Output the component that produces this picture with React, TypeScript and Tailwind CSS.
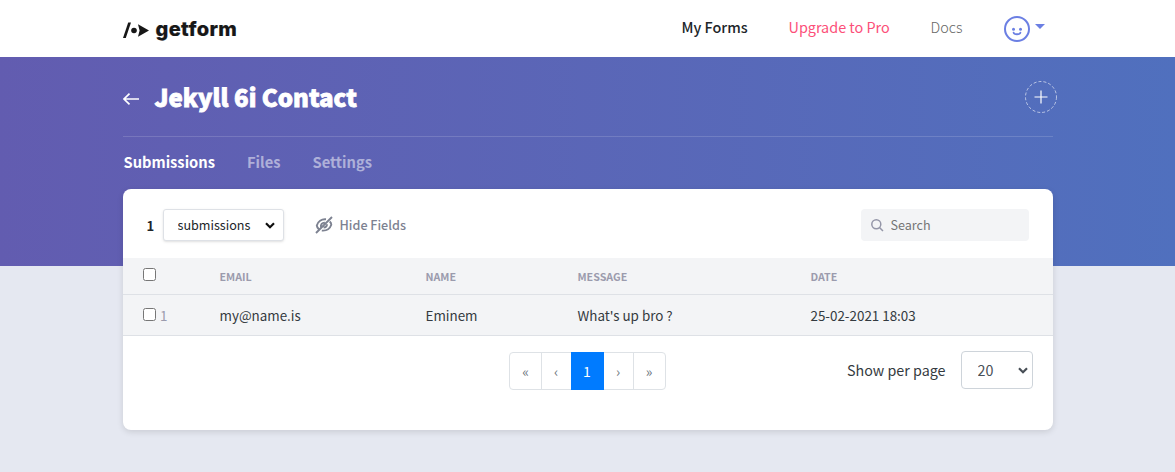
import React from 'react';

const tabs = ['Submissions', 'Files', 'Settings'];

function Logo() {
  return (
    <div className="flex items-center">
      <svg width="26" height="18" viewBox="0 0 26 18" className="mt-[3px]" fill="#171717">
        <path d="M0 17L5.200 1.500H8L2.800 17Z" />
        <circle cx="11" cy="9.500" r="2.800" />
        <path d="M15 3.300L26 9.500L15 15.700L16.600 9.500Z" />
      </svg>
      <span className="ml-[7px] font-['Inter',sans-serif] text-[20px] leading-6 font-extrabold tracking-[0.4px] text-[#171717] [-webkit-text-stroke:0.2px_#171717]">getform</span>
    </div>
  );
}

function Avatar() {
  return (
    <svg width="26" height="26" viewBox="0 0 26 26" fill="none" stroke="#6b7fe3" strokeWidth="2">
      <circle cx="13" cy="13" r="12" />
      <path d="M9.600 16.600C10 18.800 16 18.800 16.400 16.600" strokeLinecap="round" strokeWidth="1.800" />
      <circle cx="9.500" cy="13.300" r="1.500" fill="#6b7fe3" stroke="none" />
      <circle cx="16.500" cy="13.300" r="1.500" fill="#6b7fe3" stroke="none" />
    </svg>
  );
}

function SelectArrow({ className }: { className: string }) {
  return (
    <svg width="10" height="7" viewBox="0 0 10 7" className={`pointer-events-none absolute ${className}`} fill="none" stroke="currentColor" strokeWidth="2.200">
      <path d="M1 1.200L5 5.200L9 1.200" />
    </svg>
  );
}

function Header() {
  return (
    <header className="h-[57px] bg-white">
      <div className="mx-auto flex h-[57px] w-[930px] items-center justify-between">
        <Logo />
        <nav className="flex items-center text-[14.4px] leading-6">
          <span className="mb-[3px] w-[107px] font-medium text-[#212529]">My Forms</span>
          <span className="mb-[3px] w-[142px] text-[#fc4f79]">Upgrade to Pro</span>
          <span className="mb-[3px] w-[73px] font-light text-[#666]">Docs</span>
          <Avatar />
          <svg width="10" height="5" viewBox="0 0 10 5" className="mr-[8px] mb-1 ml-[5px]" fill="#6b7fe3">
            <path d="M0 0H10L5 5Z" />
          </svg>
        </nav>
      </div>
    </header>
  );
}

function Toolbar() {
  return (
    <div className="flex h-[69px] items-center px-6 pt-[3px]">
      <span className="w-4 pt-px text-[13px] font-bold text-[#212529]">1</span>
      <div className="relative text-[#111]">
        <select className="block h-8 w-[121px] appearance-none rounded-[3px] border border-[#dee1e6] bg-white pl-[14px] text-[12.6px] text-[#212529] shadow-sm">
          <option>submissions</option>
        </select>
        <SelectArrow className="top-[13px] right-[9px]" />
      </div>
      <svg width="18" height="18" viewBox="0 0 18 18" className="ml-[31px]" fill="none" stroke="#7d8291" strokeWidth="1.900">
        <path d="M11 3.300C6.500 2.800 2.800 5.500 1.800 9.500C2 11 2.600 12 3.700 13M14.700 5.500C15.800 6.500 16.300 7.500 16.300 8.800C15 12.500 11.500 15 6.800 14.600M6 11C5.300 8.500 7.200 6.400 9.800 6.600M8.600 11.600C10.600 11.400 12 10 12 8.200M1 17L17 1" />
      </svg>
      <span className="ml-[7px] text-[12.600px] font-medium text-[#7d8291]">Hide Fields</span>
      <div className="ml-auto flex h-8 w-[168px] items-center rounded bg-[#f3f4f6] pl-[10px]">
        <svg width="13" height="13" viewBox="0 0 13 13" fill="none" stroke="#9496a8" strokeWidth="1.500">
          <circle cx="5.300" cy="5.300" r="4.500" />
          <path d="M8.500 8.500L12 12" />
        </svg>
        <input placeholder="Search" className="ml-[7px] w-[120px] text-[12.6px] outline-none placeholder:text-[#757575]" />
      </div>
    </div>
  );
}

const columns = 'grid grid-cols-[77px_206px_152px_233px_1fr] pl-5';

function Table() {
  return (
    <div className="bg-[#f3f4f6]">
      <div className={`${columns} h-[37px] border-b border-[#dee1e6] pt-[9px] text-[10.7px] leading-[19px] font-bold text-[#9b9bad]`}>
        <input type="checkbox" className="mt-[1px] h-[13px] w-[13px]" />
        <span>EMAIL</span>
        <span>NAME</span>
        <span>MESSAGE</span>
        <span>DATE</span>
      </div>
      <div className={`${columns} h-[41px] border-b border-[#dee1e6] pt-[10px] text-[13.400px] leading-5 text-[#343a40]`}>
        <span className="flex items-start">
          <input type="checkbox" className="mt-[3px] h-[13px] w-[13px]" />
          <span className="ml-[4.5px] text-[#9b9bad]">1</span>
        </span>
        <span>my@name.is</span>
        <span>Eminem</span>
        <span>What's up bro ?</span>
        <span>25-02-2021 18:03</span>
      </div>
    </div>
  );
}

function Pager() {
  return (
    <div className="flex items-start pt-[15px] pr-5 pl-[386px]">
      <div className="mt-px flex h-[38px] w-[157px] rounded border border-[#dee2e6] text-center text-[14px] leading-[37px] text-[#6c757d]">
        <span className="w-8 border-r border-[#dee2e6] pl-px">«</span>
        <span className="w-[29px]">‹</span>
        <span className="-my-px h-[38px] w-[33px] bg-[#007bff] leading-[39px] text-white">1</span>
        <span className="w-[30px] border-r border-[#dee2e6]">›</span>
        <span className="w-[31px]">»</span>
      </div>
      <span className="ml-auto text-[14.3px] leading-[38px] text-[#343a40]">Show per page</span>
      <div className="relative ml-[15px] text-[#495057]">
        <select className="block h-[38px] w-[72px] appearance-none rounded border border-[#ced4da] bg-white pl-[16px] text-[14.3px]">
          <option>20</option>
        </select>
        <SelectArrow className="top-[16px] right-[5px]" />
      </div>
    </div>
  );
}

export default function App() {
  return (
    <div className="h-[472px] overflow-hidden bg-[#e5e8f1] font-['Noto_Sans_CJK_SC','Noto_Sans',sans-serif]">
      <Header />
      <div className="h-[209px] bg-linear-to-r from-[#625cb0] to-[#5070be]">
        <div className="mx-auto w-[930px]">
          <div className="flex h-20 items-center border-b border-white/15 text-white">
            <svg width="16" height="12" viewBox="0 0 16 12" className="mt-[5px]" fill="none" stroke="white" strokeWidth="1.700">
              <path d="M16 6H1M6.500 .7L1 6L6.500 11.300" />
            </svg>
            <h1 className="ml-4 text-[24px] leading-9 font-black [-webkit-text-stroke:0.8px_white]">Jekyll 6i Contact</h1>
            <svg width="32" height="32" viewBox="0 0 32 32" className="-mr-1 ml-auto" fill="none" stroke="white">
              <circle cx="16" cy="16" r="15.500" strokeDasharray="3 2" strokeOpacity=".6" />
              <path d="M16 9.500V22.500M9.500 16H22.500" strokeWidth="1.200" />
            </svg>
          </div>
          <nav className="flex h-[52px] items-center gap-8 pb-[2px] pl-px text-[14.700px] font-bold">
            {tabs.map((tab, i) => (
              <span key={tab} className={i === 0 ? 'text-white' : 'text-white/50'}>{tab}</span>
            ))}
          </nav>
          <main className="h-[241px] overflow-hidden rounded-lg bg-white shadow-[0_2px_6px_rgba(0,0,0,0.12)]">
            <Toolbar />
            <Table />
            <Pager />
          </main>
        </div>
      </div>
    </div>
  );
}
